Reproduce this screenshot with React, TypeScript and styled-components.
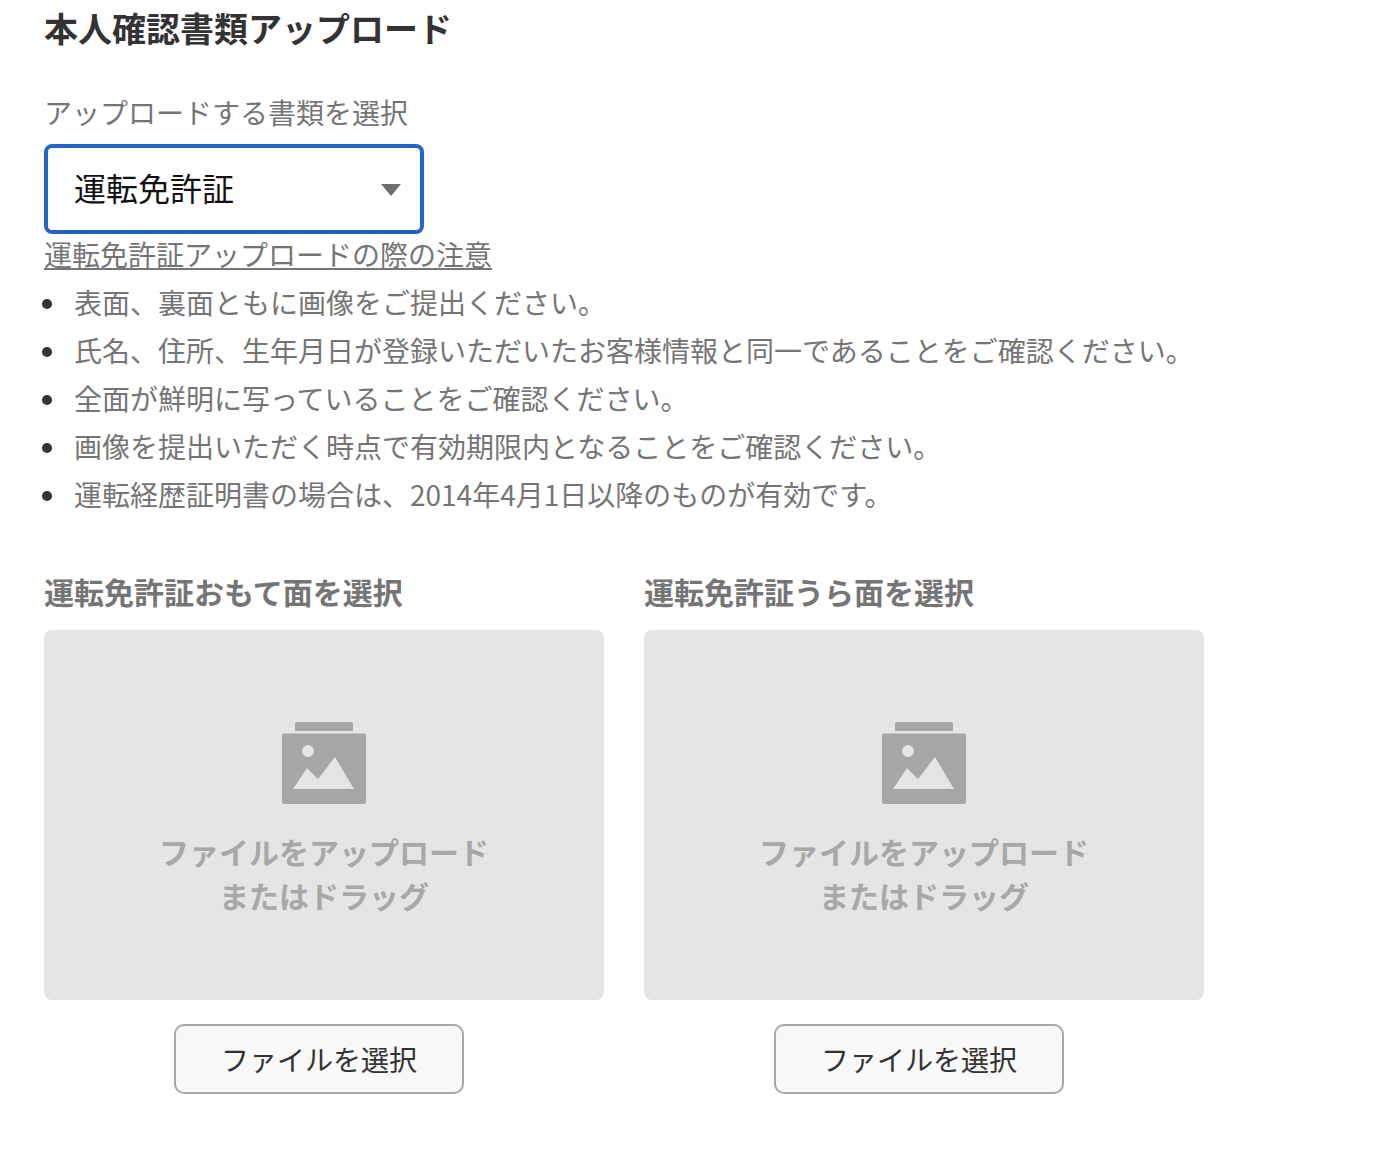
import React from "react";
import styled, { createGlobalStyle } from "styled-components";

const GlobalStyle = createGlobalStyle`
  html, body {
    margin: 0;
    padding: 0;
    background: #fff;
    font-family: "Noto Sans CJK JP", "Roboto", sans-serif;
  }
`;

const Page = styled.div`
  padding: 0 0 64px 44px;
  color: #757575;
`;

const Title = styled.h1`
  margin: 0;
  padding-bottom: 4px;
  font-size: 34px;
  line-height: 56px;
  font-weight: 700;
  color: #333;
`;

const FieldLabel = styled.label`
  display: block;
  margin: 30px 0 6px;
  padding-bottom: 4px;
  font-size: 28px;
  line-height: 44px;
`;

const SelectBox = styled.div`
  box-sizing: border-box;
  display: flex;
  align-items: center;
  justify-content: space-between;
  width: 380px;
  height: 90px;
  padding: 0 19px 4px 26px;
  border: 4px solid #2565c7;
  border-radius: 8px;
  font-size: 32px;
  color: #111;
`;

const Caret = styled.span`
  width: 0;
  height: 0;
  margin-top: 6px;
  border-left: 10px solid transparent;
  border-right: 10px solid transparent;
  border-top: 12px solid #6f6f6f;
`;

const NoteLink = styled.a`
  display: block;
  width: fit-content;
  padding-bottom: 4px;
  font-size: 28px;
  line-height: 40px;
  color: #757575;
  text-decoration: underline;
  text-underline-offset: 2px;
  text-decoration-thickness: 2px;
`;

const Notes = styled.ul`
  margin: 2px 0 0;
  padding: 0 0 0 30px;
  list-style: none;
  font-size: 28px;
  line-height: 44px;
`;

const Note = styled.li`
  position: relative;
  padding-bottom: 4px;

  &::before {
    content: "";
    position: absolute;
    left: -32px;
    top: 19px;
    width: 10px;
    height: 10px;
    border-radius: 50%;
    background: #333;
  }
`;

const Uploads = styled.div`
  display: flex;
  gap: 40px;
  margin-top: 51px;
`;

const Column = styled.section`
  width: 560px;
`;

const SideTitle = styled.h2`
  margin: 0 0 15px;
  padding-bottom: 4px;
  font-size: 30px;
  line-height: 40px;
  font-weight: 700;
  color: #757575;
`;

const DropZone = styled.div`
  display: flex;
  flex-direction: column;
  align-items: center;
  height: 370px;
  padding-top: 92px;
  box-sizing: border-box;
  border-radius: 8px;
  background: #e5e5e5;
`;

const DropText = styled.p`
  margin: 25px 0 0;
  font-size: 30px;
  line-height: 44px;
  font-weight: 700;
  text-align: center;
  color: #a8a8a8;
`;

const PickButton = styled.button`
  display: block;
  box-sizing: border-box;
  width: 290px;
  height: 70px;
  margin: 24px 0 0 130px;
  padding: 0;
  border: 2px solid #a8a8a8;
  border-radius: 10px;
  background: #f8f8f8;
  font-family: inherit;
  font-size: 28px;
  color: #333;
`;

const PictureIcon = () => (
	<svg width="84" height="82" viewBox="0 0 84 82" aria-hidden="true">
		<path fill="#a6a6a6" d="M13 9V2a2 2 0 0 1 2-2h54a2 2 0 0 1 2 2v7z" />
		<path
			fill="#a6a6a6"
			fillRule="evenodd"
			d="M2 11.500h80a2 2 0 0 1 2 2V80a2 2 0 0 1-2 2H2a2 2 0 0 1-2-2V13.500a2 2 0 0 1 2-2zM32 29a6 6 0 1 0-12 0 6 6 0 0 0 12 0zM11 67h61L53 35 36 57 25 46z"
		/>
	</svg>
);

const sides = ["おもて面", "うら面"];

const notes = [
	"表面、裏面ともに画像をご提出ください。",
	"氏名、住所、生年月日が登録いただいたお客様情報と同一であることをご確認ください。",
	"全面が鮮明に写っていることをご確認ください。",
	"画像を提出いただく時点で有効期限内となることをご確認ください。",
	"運転経歴証明書の場合は、2014年4月1日以降のものが有効です。",
];

export default function App() {
	return (
		<Page>
			<GlobalStyle />
			<Title>本人確認書類アップロード</Title>
			<FieldLabel>アップロードする書類を選択</FieldLabel>
			<SelectBox>
				運転免許証
				<Caret />
			</SelectBox>
			<NoteLink>運転免許証アップロードの際の注意</NoteLink>
			<Notes>
				{notes.map((note) => (
					<Note key={note}>{note}</Note>
				))}
			</Notes>
			<Uploads>
				{sides.map((side) => (
					<Column key={side}>
						<SideTitle>運転免許証{side}を選択</SideTitle>
						<DropZone>
							<PictureIcon />
							<DropText>
								ファイルをアップロード
								<br />
								またはドラッグ
							</DropText>
						</DropZone>
						<PickButton>ファイルを選択</PickButton>
					</Column>
				))}
			</Uploads>
		</Page>
	);
}
